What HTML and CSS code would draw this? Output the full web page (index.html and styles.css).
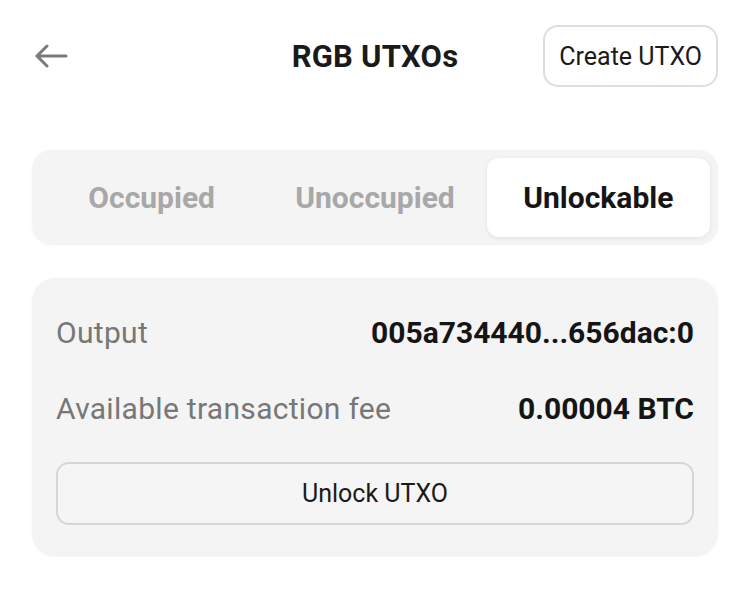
FILE: index.html
```html
<!DOCTYPE html>
<html>
<head>
<meta charset="utf-8">
<link rel="stylesheet" href="styles.css">
</head>
<body>
<div class="page">
  <header class="header">
    <button class="back" aria-label="Back">
      <svg width="34" height="24" viewBox="0 0 34 24"><path d="M32 12H3M13 2L3 12l10 10" fill="none" stroke="#7a7a7a" stroke-width="3" stroke-linecap="round" stroke-linejoin="round"/></svg>
    </button>
    <h1 class="title">RGB UTXOs</h1>
    <button class="create">Create UTXO</button>
  </header>
  <nav class="tabs">
    <div class="tab">Occupied</div>
    <div class="tab">Unoccupied</div>
    <div class="tab active">Unlockable</div>
  </nav>
  <section class="card">
    <div class="row"><span class="label">Output</span><span class="value">005a734440...656dac:0</span></div>
    <div class="row"><span class="label">Available transaction fee</span><span class="value">0.00004 BTC</span></div>
    <button class="unlock">Unlock UTXO</button>
  </section>
</div>
</body>
</html>
```
FILE: styles.css
```css
* { box-sizing: border-box; }
html, body { margin: 0; background: #fff; }
body { font-family: Roboto, "Noto Sans", sans-serif; color: #151515; }
.page { width: 750px; padding: 25px 32px 0 32px; }
.header { display: grid; grid-template-columns: 1fr auto 1fr; align-items: center; height: 62px; }
.back { justify-self: start; background: none; border: 0; padding: 0 0 0 2px; display: flex; cursor: pointer; }
.title { margin: 0; font-size: 31px; font-weight: 700; letter-spacing: 0.2px; color: #1a1a1a; }
.create { justify-self: end; height: 62px; padding: 0 14px; border: 2px solid #dedede; border-radius: 15px; background: #fff; font-family: inherit; font-size: 25px; color: #1a1a1a; }
.tabs { margin-top: 63px; background: #f4f4f4; border-radius: 20px; padding: 8px; display: grid; grid-template-columns: repeat(3, 1fr); height: 95px; box-shadow: 0 0 3px rgba(0,0,0,0.04); }
.tab { display: flex; align-items: center; justify-content: center; font-size: 30px; font-weight: 700; color: #a8a8a8; border-radius: 12px; }
.tab.active { background: #fff; color: #151515; box-shadow: 0 1px 4px rgba(0,0,0,0.08); }
.card { margin-top: 33px; background: #f4f4f4; border-radius: 24px; padding: 30px 24px 32px 24px; box-shadow: 0 0 3px rgba(0,0,0,0.04); }
.row { display: flex; justify-content: space-between; align-items: center; height: 48px; margin-bottom: 28px; }
.row + .row { margin-bottom: 30px; }
.label { font-size: 30px; color: #777; letter-spacing: 0.3px; }
.value { font-size: 30px; font-weight: 700; color: #151515; }
.unlock { display: block; width: 100%; height: 63px; border: 2px solid #d6d6d6; border-radius: 13px; background: #f5f5f5; font-family: inherit; font-size: 25px; color: #1a1a1a; }
```
